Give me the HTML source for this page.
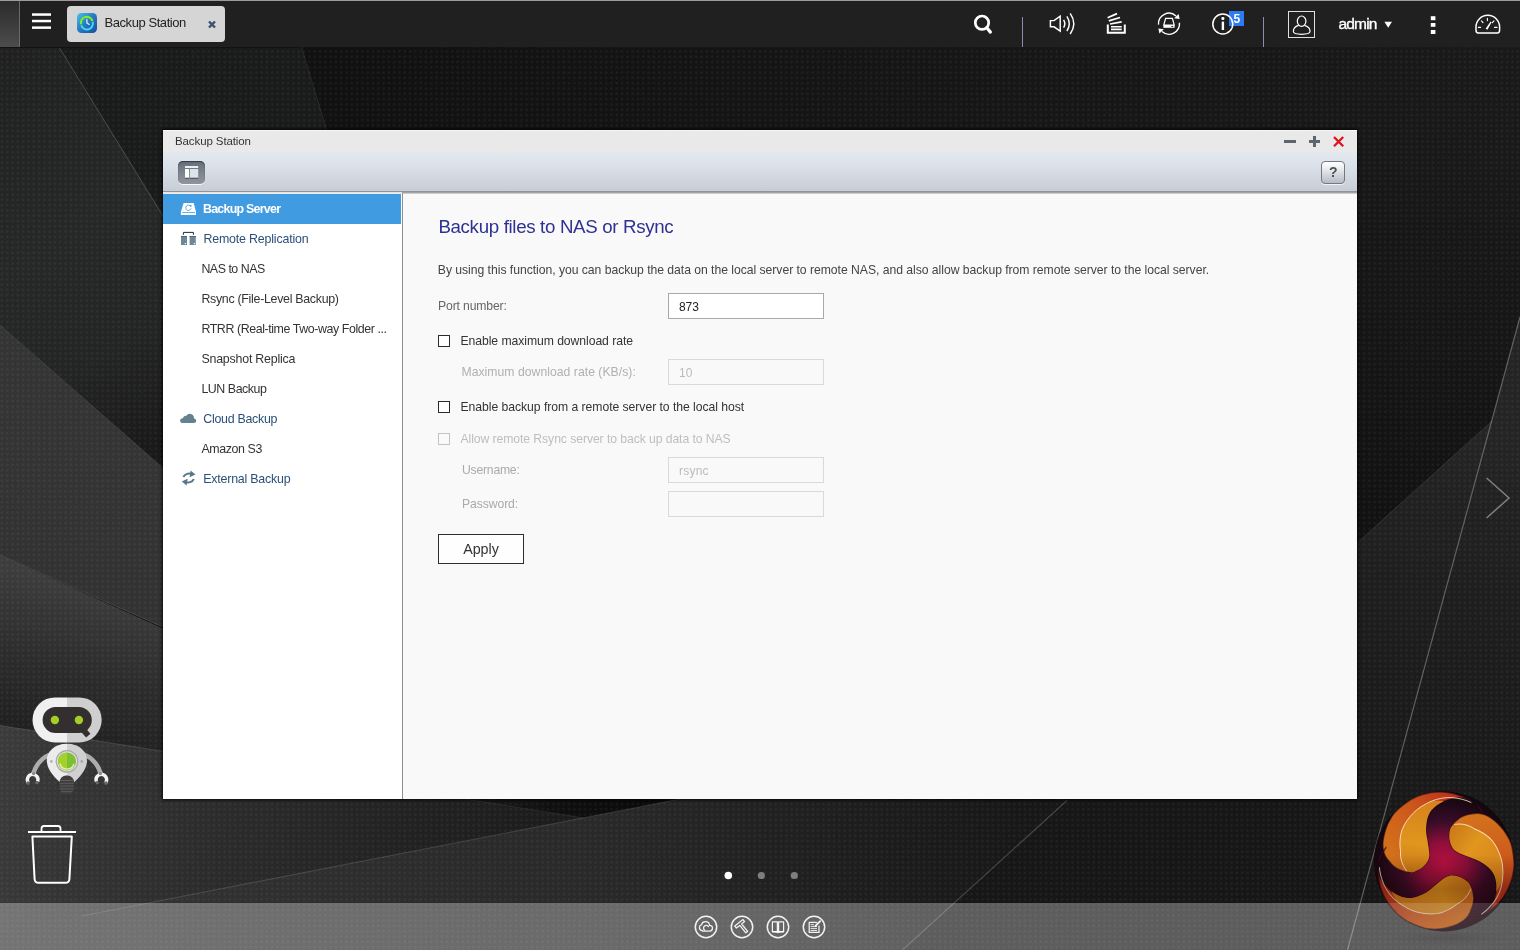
<!DOCTYPE html>
<html lang="en">
<head>
<meta charset="utf-8">
<title>Backup Station</title>
<style>
html,body{margin:0;padding:0;}
body{width:1520px;height:950px;overflow:hidden;position:relative;background:#181818;font-family:"Liberation Sans",sans-serif;}
.a{position:absolute;}
.t{position:absolute;white-space:nowrap;line-height:1;}
#texts{position:absolute;left:0;top:0;width:1520px;height:950px;will-change:transform;}
svg{position:absolute;overflow:visible;}
#bg{left:0;top:0;width:1520px;height:950px;}
#topbar{position:absolute;left:0;top:0;width:1520px;height:47px;background:#202020;}
#topline{position:absolute;left:0;top:0;width:1520px;height:1px;background:#9c9c9c;}
#deskbtn{position:absolute;left:0;top:1px;width:19px;height:46px;background:linear-gradient(#2b2b2b,#4c4c4c);border-right:1px solid #6a6a6a;}
#tab{position:absolute;left:67px;top:6px;width:158px;height:36px;background:#d5d5d5;border-radius:4px;}
.sep{position:absolute;top:17px;width:1px;height:30px;background:#8c8cb8;}
#badge{position:absolute;left:1229px;top:11px;width:15px;height:15px;background:#2d7bf4;}
#ubox{position:absolute;left:1288px;top:11px;width:25px;height:25px;border:1px solid #e0e0e0;}
#win{position:absolute;left:163px;top:130px;width:1194px;height:669px;background:#f9f9f9;box-shadow:0 0 3px 1px rgba(0,0,0,.85);}
#titlebar{position:absolute;left:0;top:0;width:1194px;height:22px;background:#e9e9e9;border-top:1px solid #f6f6f6;box-sizing:border-box;}
#toolbar{position:absolute;left:0;top:22px;width:1194px;height:39px;background:linear-gradient(#e4e9f0,#dbe1e9 35%,#ccd2db 85%,#c8ced7);}
#tbline{position:absolute;left:0;top:60.600px;width:1194px;height:3px;background:linear-gradient(#8e8e8e,#9c9c9c 45%,#e2e2e2);}
#side{position:absolute;left:0;top:62px;width:238.500px;height:607px;background:linear-gradient(#e4e1de,#f1efed 2px,#fff 2px);}
#sdiv{position:absolute;left:238.800px;top:62.500px;width:1.400px;height:606.500px;background:#8f8f8f;}
#sel{position:absolute;left:0;top:2px;width:238px;height:29.7px;background:#419be1;}
#sbtn{position:absolute;left:15px;top:31px;width:27px;height:23px;border-radius:5px;background:linear-gradient(#666e79,#7b838d 50%,#8f959f);box-shadow:0 1px 0 rgba(255,255,255,.85),inset 0 1px 1px rgba(30,35,40,.7);}
#hbtn{position:absolute;left:1157.5px;top:30.5px;width:22px;height:21px;border-radius:4px;border:1px solid #727985;background:linear-gradient(#ffffff,#eceef1 30%,#d0d3da 65%,#b7bbc5);box-shadow:0 1px 0 rgba(255,255,255,.7);}
.inp{position:absolute;left:505px;width:154px;height:24px;border:1px solid #a9a9a9;background:#fff;}
.inp.d{border-color:#d9d9d9;background:#f9f9f9;}
.cb{position:absolute;left:275px;width:10px;height:10px;border:1px solid #2a2a2a;background:#fff;}
.cb.d{border-color:#c4c4c4;background:#fafafa;}
#apply{position:absolute;left:275px;top:404px;width:84px;height:28px;border:1px solid #2e2e2e;background:#fefefe;}
#dock{position:absolute;left:0;top:903px;width:1520px;height:47px;background:rgba(255,255,255,.305);}
</style>
</head>

<body>
<svg id="bg" viewBox="0 0 1520 950">
  <defs>
    <pattern id="dots" width="5.3" height="5.3" patternUnits="userSpaceOnUse" patternTransform="translate(-0.5 1.3)">
      <rect x="1.2" y="1.2" width="2.6" height="2.6" rx="1.1" fill="#fff" opacity=".048"/>
    </pattern>
    <filter id="nz" x="0" y="0" width="100%" height="100%">
      <feTurbulence type="fractalNoise" baseFrequency=".75" numOctaves="2" seed="7" result="n"/>
      <feColorMatrix type="matrix" values="0 0 0 0 1  0 0 0 0 1  0 0 0 0 1  .9 .9 .9 0 -1.05"/>
    </filter>
    <linearGradient id="gb" gradientUnits="userSpaceOnUse" x1="300" y1="0" x2="1520" y2="0">
      <stop offset="0" stop-color="#101010"/><stop offset="1" stop-color="#1a1a1a"/>
    </linearGradient>
    <linearGradient id="g9" gradientUnits="userSpaceOnUse" x1="0" y1="150" x2="0" y2="520">
      <stop offset="0" stop-color="#000" stop-opacity="0"/><stop offset="1" stop-color="#000" stop-opacity=".32"/>
    </linearGradient>
    <linearGradient id="g0" gradientUnits="userSpaceOnUse" x1="0" y1="60" x2="200" y2="420">
      <stop offset="0" stop-color="#212222"/><stop offset=".45" stop-color="#282929"/><stop offset=".75" stop-color="#252626"/><stop offset="1" stop-color="#1a1a1a"/>
    </linearGradient>
    <linearGradient id="g1" gradientUnits="userSpaceOnUse" x1="60" y1="380" x2="0" y2="560">
      <stop offset="0" stop-color="#383838"/><stop offset="1" stop-color="#353535"/>
    </linearGradient>
    <linearGradient id="g2" gradientUnits="userSpaceOnUse" x1="40" y1="575" x2="0" y2="735">
      <stop offset="0" stop-color="#414141"/><stop offset=".45" stop-color="#313131"/><stop offset="1" stop-color="#202020"/>
    </linearGradient>
    <linearGradient id="g3" gradientUnits="userSpaceOnUse" x1="0" y1="730" x2="0" y2="910">
      <stop offset="0" stop-color="#3c3c3c"/><stop offset=".45" stop-color="#2f2f2f"/><stop offset="1" stop-color="#282828"/>
    </linearGradient>
    <linearGradient id="g4" gradientUnits="userSpaceOnUse" x1="0" y1="760" x2="760" y2="900">
      <stop offset="0" stop-color="#3f3f3f"/><stop offset=".12" stop-color="#373737"/><stop offset=".4" stop-color="#292929"/><stop offset=".7" stop-color="#1d1d1d"/><stop offset="1" stop-color="#161616"/>
    </linearGradient>
    <linearGradient id="g7" gradientUnits="userSpaceOnUse" x1="0" y1="0" x2="1067" y2="0">
      <stop offset="0" stop-color="#3b3b3b"/><stop offset=".094" stop-color="#383838"/><stop offset=".215" stop-color="#333"/><stop offset=".56" stop-color="#2b2b2b"/><stop offset=".8" stop-color="#1e1e1e"/><stop offset=".94" stop-color="#191919"/><stop offset="1" stop-color="#171717"/>
    </linearGradient>
    <linearGradient id="g8" gradientUnits="userSpaceOnUse" x1="458" y1="0" x2="640" y2="0">
      <stop offset="0" stop-color="#1c1c1c"/><stop offset=".5" stop-color="#101010"/><stop offset="1" stop-color="#090909"/>
    </linearGradient>
    <linearGradient id="g5" gradientUnits="userSpaceOnUse" x1="1440" y1="440" x2="1390" y2="900">
      <stop offset="0" stop-color="#262626"/><stop offset=".3" stop-color="#1f1f1f"/><stop offset=".65" stop-color="#1b1b1b"/><stop offset="1" stop-color="#171717"/>
    </linearGradient>
    <linearGradient id="g6" gradientUnits="userSpaceOnUse" x1="0" y1="903" x2="0" y2="800">
      <stop offset="0" stop-color="#000" stop-opacity="0"/><stop offset="1" stop-color="#000" stop-opacity=".35"/>
    </linearGradient>
  </defs>
  <rect width="1520" height="950" fill="url(#gb)"/>
  <!-- top-left facets -->
  <polygon points="60,48 301.600,48 420,440 500,763" fill="#1a1b1b"/>
  <polygon points="0,48 60,48 500,763 0,325" fill="url(#g0)"/>
  <polygon points="0,325 500,763 500,777 0,555" fill="url(#g1)"/>
  <polygon points="0,555 583.300,817.900 0,725.500" fill="url(#g2)"/>
  <polygon points="0,725.500 583.300,817.900 680,799 1357,799 1357,950 0,950" fill="url(#g4)"/>
  <polygon points="1357,48 1520,48 1520,317 1492,421 1357,543" fill="url(#g9)"/>
  <!-- right facets -->
  <polygon points="1520,317 1520,950 1348,950" fill="url(#g5)"/>
  <polygon points="1357,543 1492,421 1348,950 1357,950" fill="url(#g5)"/>

    <polygon points="0,932 680,799 1067,800 902,950 0,950" fill="url(#g7)"/>
  <polygon points="458,799 680,799 583.300,817.900" fill="url(#g8)"/>
  <!-- lines -->
  <g stroke="#fff" fill="none">
    <line x1="59.600" y1="48" x2="163" y2="216" stroke-opacity=".2" stroke-width="1"/>
    <line x1="301.600" y1="47" x2="326.500" y2="130" stroke-opacity=".1" stroke-width="1"/>
    <line x1="0" y1="325" x2="163" y2="468" stroke-opacity=".1" stroke-width="1"/>
    <line x1="0" y1="555" x2="163" y2="627" stroke-opacity=".12" stroke-width="1"/>
    <line x1="0" y1="725.500" x2="163" y2="751.300" stroke-opacity=".16" stroke-width="1"/>
    <line x1="82" y1="916" x2="680" y2="799" stroke-opacity=".14" stroke-width="1.200"/>
    <line x1="460" y1="798.400" x2="583.300" y2="817.900" stroke-opacity=".1" stroke-width="1"/>
    <line x1="1067.500" y1="800" x2="902.500" y2="950" stroke-opacity=".22" stroke-width="1.200"/>
    <line x1="1520" y1="317" x2="1347.500" y2="950" stroke-opacity=".33" stroke-width="1.200"/>
    <line x1="1357" y1="543" x2="1492" y2="421" stroke-opacity=".1" stroke-width="1"/>
  </g>
  <rect width="1520" height="950" fill="#000" opacity=".09"/>
  <rect width="1520" height="950" fill="url(#dots)"/>
  <rect width="1520" height="950" filter="url(#nz)" opacity=".035"/>
</svg>

<svg id="ball" style="left:0;top:0;width:1520px;height:950px" viewBox="0 0 1520 950">
  <defs>
    <radialGradient id="bbase" cx=".5" cy=".52" r=".5">
      <stop offset="0" stop-color="#b81040"/><stop offset=".32" stop-color="#8c0f3a"/><stop offset=".62" stop-color="#380b28" stop-opacity=".96"/><stop offset="1" stop-color="#12040c" stop-opacity=".85"/>
    </radialGradient>
    <linearGradient id="blobe" gradientUnits="userSpaceOnUse" x1="-.8" y1="0" x2=".5" y2="-.9">
      <stop offset="0" stop-color="#d4741c"/><stop offset=".45" stop-color="#cc581c"/><stop offset=".8" stop-color="#bc341c"/><stop offset="1" stop-color="#a01c1c"/>
    </linearGradient>
    <linearGradient id="blobe2" gradientUnits="userSpaceOnUse" x1="-.4" y1=".15" x2="-.3" y2="-.85">
      <stop offset="0" stop-color="#cc7a18"/><stop offset=".4" stop-color="#e0961e"/><stop offset="1" stop-color="#d8821c"/>
    </linearGradient>
    <linearGradient id="bshade" gradientUnits="userSpaceOnUse" x1="0" y1="-.1" x2="0" y2="1">
      <stop offset="0" stop-color="#200" stop-opacity="0"/><stop offset=".45" stop-color="#200" stop-opacity=".3"/><stop offset="1" stop-color="#200" stop-opacity=".12"/>
    </linearGradient>
    <radialGradient id="bsh" cx=".5" cy=".5" r=".5">
      <stop offset="0" stop-color="#000" stop-opacity=".5"/><stop offset="1" stop-color="#000" stop-opacity="0"/>
    </radialGradient>
    <g id="lobe">
      <path d="M.59 -.61 C.52 -.76 .45 -.84 .36 -.88 C.2 -.97 .05 -1 -.1 -.99 C-.25 -.98 -.38 -.94 -.48 -.88 C-.6 -.8 -.68 -.74 -.74 -.65 C-.8 -.56 -.83 -.48 -.85 -.4 C-.87 -.32 -.88 -.25 -.87 -.18 C-.86 -.1 -.83 -.05 -.79 -.01 C-.74 .06 -.68 .11 -.61 .13 C-.55 .16 -.49 .16 -.43 .15 C-.37 .13 -.32 .1 -.28 .06 C-.24 .02 -.21 -.03 -.21 -.09 C-.21 -.16 -.23 -.24 -.24 -.32 C-.26 -.4 -.26 -.48 -.25 -.55 C-.24 -.62 -.22 -.68 -.18 -.73 C-.13 -.79 -.07 -.83 0 -.86 C.08 -.89 .15 -.91 .23 -.91 C.33 -.9 .42 -.86 .5 -.78 C.54 -.72 .57 -.67 .59 -.61 Z" fill="url(#blobe)" stroke="#1a0510" stroke-opacity=".55" stroke-width=".02"/>
      <path d="M-.53 .14 C-.6 .05 -.63 -.05 -.62 -.14 C-.64 -.25 -.63 -.36 -.6 -.45 C-.56 -.55 -.5 -.63 -.43 -.7 C-.36 -.77 -.27 -.82 -.18 -.86 C-.12 -.87 -.06 -.87 0 -.86 C-.07 -.83 -.13 -.79 -.18 -.73 C-.22 -.68 -.24 -.62 -.25 -.55 C-.26 -.48 -.26 -.4 -.24 -.32 C-.23 -.24 -.21 -.16 -.21 -.09 C-.21 -.03 -.24 .02 -.28 .06 C-.32 .1 -.37 .13 -.43 .15 C-.47 .16 -.5 .15 -.53 .14 Z" fill="url(#blobe2)"/>
      <path d="M-.53 .14 C-.6 .05 -.63 -.05 -.62 -.14 C-.64 -.25 -.63 -.36 -.6 -.45 C-.56 -.55 -.5 -.63 -.43 -.7 C-.36 -.77 -.27 -.82 -.18 -.86 C-.08 -.9 .03 -.92 .13 -.91 C.22 -.9 .31 -.88 .39 -.84" fill="none" stroke="#fff5d8" stroke-opacity=".8" stroke-width=".014"/>
    </g>
  </defs>
  <ellipse cx="1450" cy="938" rx="62" ry="7" fill="url(#bsh)"/>
  <g id="ballg" transform="translate(1444 861.400) scale(70)">
    <circle r="1" fill="url(#bbase)"/>
    <use href="#lobe"/>
    <use href="#lobe" transform="rotate(120)"/>
    <use href="#lobe" transform="rotate(240)"/>
    <circle r="1" fill="url(#bshade)"/>
  </g>
</svg>
<div id="dock"></div>
<svg id="deskicons" style="left:0;top:0;width:1520px;height:950px" viewBox="0 0 1520 950">
  <defs>
    <clipPath id="hl"><rect x="20" y="690" width="47" height="60"/></clipPath>
    <clipPath id="hr"><rect x="67" y="690" width="50" height="60"/></clipPath>
    <clipPath id="bl"><rect x="20" y="740" width="47" height="45"/></clipPath>
    <clipPath id="br"><rect x="67" y="740" width="50" height="45"/></clipPath>
  </defs>
  <clipPath id="dockclip"><rect x="1360" y="903" width="160" height="47"/></clipPath>
  <g clip-path="url(#dockclip)" opacity=".5"><use href="#ballg"/></g>
  <!-- page dots -->
  <circle cx="728.3" cy="875.5" r="3.8" fill="#fff"/>
  <circle cx="761.3" cy="875.5" r="3.600" fill="#7e7e7e"/>
  <circle cx="794.3" cy="875.5" r="3.600" fill="#7e7e7e"/>
  <!-- chevron -->
  <path d="M1486.600 478 L1509 498 L1486.600 518" fill="none" stroke="#808080" stroke-width="1.500"/>
  <!-- robot -->
  <g id="robot">
    <!-- arms -->
    <path d="M50 754.500 C40.500 758.500 35.500 766 33.200 774" fill="none" stroke="#adadad" stroke-width="4.600" stroke-linecap="round"/>
    <path d="M84 754.500 C93.500 758.500 98.500 766 100.800 774" fill="none" stroke="#adadad" stroke-width="4.600" stroke-linecap="round"/>
    <path d="M28.400 782.800 A5.300 5.300 0 1 1 37.600 781.600" fill="none" stroke="#f4f4f4" stroke-width="3.400"/>
    <path d="M96.400 781.600 A5.300 5.300 0 1 1 105.600 782.800" fill="none" stroke="#f4f4f4" stroke-width="3.400"/>
    <path d="M26.800 781.200 L30 781.800 L29.200 785 L26.400 784.200 Z M36 780.800 L39 781.800 L37.600 784.600 L35 783.600 Z" fill="#6a6a6a"/>
    <path d="M107.200 781.200 L104 781.800 L104.800 785 L107.600 784.200 Z M98 780.800 L95 781.800 L96.400 784.600 L99 783.600 Z" fill="#6a6a6a"/>
    <circle cx="33.600" cy="773.600" r="1.600" fill="#888"/>
    <circle cx="100.400" cy="773.600" r="1.600" fill="#888"/>
    <!-- body -->
    <path d="M67 743.800 C80 743.800 87 752 87 760.500 C87 770 79 778 72.500 783.500 H61.500 C55 778 46.800 770 46.800 760.500 C46.800 752 54 743.800 67 743.800 Z" fill="#ececec" clip-path="url(#bl)"/>
    <path d="M67 743.800 C80 743.800 87 752 87 760.500 C87 770 79 778 72.500 783.500 H61.500 C55 778 46.800 770 46.800 760.500 C46.800 752 54 743.800 67 743.800 Z" fill="#d0d0d0" clip-path="url(#br)"/>
    <!-- spring -->
    <rect x="59.600" y="775.500" width="14.400" height="19.300" rx="6.500" fill="#3f3d3d"/>
    <path d="M60.400 780.500 H73.200 M59.800 783.300 H73.800 M59.800 786.100 H73.800 M60 788.900 H73.600 M61.200 791.700 H72.400" stroke="#5e5c5c" stroke-width="1"/>
    <circle cx="51.400" cy="761.500" r="1.400" fill="#b4b4b4"/>
    <circle cx="81.800" cy="761.500" r="1.400" fill="#a9a9a9"/>
    <circle cx="67" cy="761.400" r="11.400" fill="#a9a9a9"/>
    <circle cx="67" cy="761.400" r="10.200" fill="#dcdcdc"/>
    <circle cx="67" cy="761.400" r="9" fill="#7fbf36"/>
    <path d="M67 752.400 A9 9 0 0 0 67 770.400 Z" fill="#a3d22e"/>
    <path d="M59.800 763.500 A7.400 7.400 0 0 0 74 764" fill="none" stroke="#e2f4b4" stroke-width="1.300"/>
    <!-- head -->
    <rect x="32.500" y="697.400" width="69.200" height="45.100" rx="22.500" fill="#f0f0f0" clip-path="url(#hl)"/>
    <rect x="32.500" y="697.400" width="69.200" height="45.100" rx="22.500" fill="#cfcfcf" clip-path="url(#hr)"/>
    <rect x="42.600" y="706.900" width="49.200" height="26.200" rx="13.100" fill="#322f2e"/>
    <path d="M81.500 728 L88.300 735.600" stroke="#322f2e" stroke-width="5.800" fill="none"/>
    <circle cx="54.900" cy="720" r="4.200" fill="#a5cd28"/>
    <circle cx="78.900" cy="720" r="4.200" fill="#a5cd28"/>
  </g>
  <!-- trash -->
  <g fill="none" stroke="#fff" stroke-width="2" stroke-linejoin="round">
    <path d="M41.500 831.500 V828.600 Q41.500 826 44 826 H58 Q60.500 826 60.500 828.600 V831.500" stroke-width="1.800"/>
    <path d="M28 832 H76"/>
    <path d="M32.400 836.500 H71.800 L69.400 879 Q69.200 882.800 65.400 882.800 H38.600 Q34.800 882.800 34.600 879 Z"/>
  </g>
  <!-- dock icons -->
  <g fill="none" stroke="#fff" stroke-opacity=".92" stroke-width="1.500">
    <circle cx="706" cy="927" r="10.700"/>
    <circle cx="742" cy="927" r="10.700"/>
    <circle cx="778" cy="927" r="10.700"/>
    <circle cx="814" cy="927" r="10.700"/>
  </g>
  <g fill="none" stroke="#fff" stroke-opacity=".92" stroke-width="1.250" stroke-linejoin="round" stroke-linecap="round">
    <!-- cloud spiral -->
    <path d="M702.500 931 H709.500 C711.500 931 712.500 929.500 712.500 928 C712.500 926.300 711 925.200 709.600 925.400 C709.400 923 707.600 921.600 705.500 921.600 C703.500 921.600 702 922.900 701.600 924.600 C700.200 925 699.400 926.200 699.400 927.600 C699.400 929.200 700.600 930.600 702.500 930.600"/>
    <path d="M708.500 926.500 C707.500 925.200 705.500 925 704.300 926.200 C703.100 927.400 703.300 929.400 704.800 930.200"/>
    <!-- hammer -->
    <path d="M734.800 926 L743 919.600 L744.600 921.600 L741.600 924 L747.600 931.400 L745.800 932.800 L739.800 925.400 L736.400 928 Z"/>
    <!-- book -->
    <path d="M772.400 921.800 H777.400 V931.600 H772.400 Z M778.600 921.800 H783.600 V931.600 H778.600 Z"/>
    <path d="M772.400 931.600 C775 932 777 932 778 932.600 C779 932 781 932 783.600 931.600"/>
    <!-- note -->
    <path d="M816.400 922.400 H809.200 V932.400 H819 V926"/>
    <path d="M811 926.600 H816.600 M811 928.600 H816.600 M811 930.500 H816.600 M811 924.600 H813.500" stroke-width=".9"/>
    <path d="M815.400 926 L820.200 921.200" stroke-width="1.800"/>
  </g>
</svg>

<div id="topbar">
  <div id="deskbtn"></div>
  <div id="tab"></div>
  <div class="sep" style="left:1022px"></div>
  <div class="sep" style="left:1263px"></div>
  <div id="badge"></div>
  <div id="ubox"></div>
  <svg id="tbicons" style="left:0;top:0;width:1520px;height:47px" viewBox="0 0 1520 47">
    <defs>
      <linearGradient id="bsg" x1="0" y1="0" x2="1" y2="1">
        <stop offset="0" stop-color="#48c4ee"/><stop offset=".45" stop-color="#2a7cc8"/><stop offset="1" stop-color="#1a4c9e"/>
      </linearGradient>
      <linearGradient id="bsr" x1="0" y1="0" x2="0" y2="1">
        <stop offset="0" stop-color="#9be83a"/><stop offset=".5" stop-color="#35d6c0"/><stop offset="1" stop-color="#29c4f2"/>
      </linearGradient>
    </defs>
    <!-- hamburger -->
    <g fill="#fff">
      <rect x="32" y="13.3" width="19" height="2.5"/>
      <rect x="32" y="19.8" width="19" height="2.5"/>
      <rect x="32" y="26.4" width="19" height="2.5"/>
    </g>
    <!-- tab app icon -->
    <rect x="77" y="13" width="20" height="20" rx="4.500" fill="url(#bsg)"/>
    <path d="M81.100 24.300 A5.900 5.900 0 0 1 92.500 21.200" fill="none" stroke="#7cee22" stroke-width="2.100"/>
    <path d="M92.700 22.100 A5.900 5.900 0 0 1 81.300 25.200" fill="none" stroke="#3fdff0" stroke-width="1.900"/>
    <path d="M86.900 19.400 V22.900 L89.200 24.500" fill="none" stroke="#cfeaf8" stroke-width="1.300" stroke-linecap="round" stroke-linejoin="round"/>
    <!-- tab close -->
    <path d="M209 21.500 L215 27.500 M215 21.500 L209 27.500" stroke="#3b506a" stroke-width="2.4" fill="none"/>
    <!-- search -->
    <circle cx="982" cy="22.7" r="6.7" fill="none" stroke="#fff" stroke-width="2.7"/>
    <path d="M986.8 27.800 L990.400 32.100" stroke="#fff" stroke-width="3.200" stroke-linecap="round"/>
    <!-- volume -->
    <g fill="none" stroke="#fff" stroke-width="1.450" stroke-linejoin="miter">
      <path d="M1050.4 20.6 H1054 L1060.2 16.2 V31.2 L1054 26.8 H1050.4 Z"/>
      <path d="M1063.6 19.8 Q1066 23.7 1063.6 27.6"/>
      <path d="M1066.9 16.4 Q1071.6 23.7 1066.9 31"/>
      <path d="M1070.2 13.4 Q1077.4 23.7 1070.2 34"/>
    </g>
    <!-- background tasks (stack) -->
    <g fill="none" stroke="#fff">
      <path d="M1107.8 24.5 V32.8 H1124.8 V24.5" stroke-width="2"/>
      <path d="M1111 29.400 H1121.700 M1111 26.700 H1121.700" stroke-width="1.600"/>
      <path d="M1110 24 L1121.7 21.8 M1108.8 20.9 L1120 17.5 M1107.600 17.800 L1117 13.600" stroke-width="1.700"/>
    </g>
    <!-- sync / backup -->
    <g fill="none" stroke="#fff" stroke-width="1.4">
      <path d="M1158.54 24.6 A10.5 10.5 0 0 1 1176 15.9"/>
      <path d="M1179.46 22.8 A10.5 10.5 0 0 1 1162 31.5"/>
    </g>
    <path d="M1179.6 18.9 L1178.6 13.9 L1174.2 18.2 Z" fill="#fff"/>
    <path d="M1158.4 28.5 L1159.4 33.5 L1163.8 29.2 Z" fill="#fff"/>
    <path d="M1165.6 18.3 H1172.4 L1174.2 25 H1163.8 Z" fill="none" stroke="#fff" stroke-width="1.2"/>
    <rect x="1163.4" y="25" width="11.200" height="2.800" fill="#fff"/>
    <rect x="1171.4" y="25.900" width="1.800" height="1" fill="#202020"/>
    <!-- info -->
    <circle cx="1222.8" cy="24" r="10" fill="none" stroke="#fff" stroke-width="1.5"/>
    <rect x="1221.7" y="21.6" width="2.4" height="8.4" fill="#fff"/>
    <rect x="1221.4" y="17" width="3" height="3" rx="1.2" fill="#fff"/>
    <!-- user -->
    <g fill="none" stroke="#fff" stroke-width="1.2">
      <ellipse cx="1301.6" cy="21.2" rx="4.3" ry="5.2"/>
      <path d="M1298.6 25.4 C1294.6 26.6 1293.2 29.4 1293.4 31.8 C1293.6 33.6 1296 34.3 1301.6 34.3 C1307.2 34.3 1309.8 33.6 1310 31.8 C1310.2 29.4 1308.6 26.6 1304.6 25.4"/>
    </g>
    <!-- dropdown arrow -->
    <path d="M1384.4 21.8 H1392 L1388.2 27.8 Z" fill="#fff"/>
    <!-- kebab -->
    <g fill="#fff">
      <rect x="1430.8" y="16.2" width="4.6" height="4"/>
      <rect x="1430.8" y="23" width="4.6" height="3.8"/>
      <rect x="1430.8" y="30" width="4.6" height="4"/>
    </g>
    <!-- dashboard gauge -->
    <g fill="none" stroke="#fff" stroke-width="1.5" stroke-linecap="round">
      <path d="M1478.2 33 C1476.6 33 1476 32 1476 30 V27 A11.8 11.8 0 0 1 1499.6 27 V30 C1499.6 32 1499 33 1497.4 33 Z" stroke-linejoin="round"/>
      <path d="M1487.4 18.2 V20.6 M1481.4 20.9 L1483 22.6 M1494 20.9 L1492.4 22.6 M1478.4 27.4 H1480.6 M1494.6 27.4 H1497" stroke-width="1.1"/>
    </g>
    <path d="M1485.6 28.8 L1490.6 21.6 L1491.6 22.2 L1487.4 29.8 Z" fill="#fff"/>
  </svg>
</div>
<div id="topline"></div>

<div id="win">
  <div id="titlebar"></div>
  <div id="toolbar"></div>
  <div id="tbline"></div>
  <div id="side"><div id="sel"></div></div>
  <div id="sdiv"></div>
  <div id="sbtn"></div>
  <div id="hbtn"></div>
  <div class="inp" style="top:163px"></div>
  <div class="inp d" style="top:229px"></div>
  <div class="inp d" style="top:327px"></div>
  <div class="inp d" style="top:361px"></div>
  <div class="cb" style="top:205px"></div>
  <div class="cb" style="top:271px"></div>
  <div class="cb d" style="top:303px"></div>
  <div id="apply"></div>
  <svg id="winicons" style="left:-163px;top:-130px;width:1520px;height:950px" viewBox="0 0 1520 950">
    <!-- window controls -->
    <rect x="1284" y="140" width="12" height="3" fill="#5d6570"/>
    <rect x="1309" y="140" width="11" height="3" fill="#5d6570"/>
    <rect x="1313" y="136" width="3" height="11" fill="#5d6570"/>
    <path d="M1334 137 L1343.2 146.2 M1343.2 137 L1334 146.2" stroke="#e0121d" stroke-width="2.3" fill="none"/>
    <!-- sidebar toggle icon -->
    <rect x="185" y="166" width="13.2" height="2" fill="#e9eff3"/>
    <rect x="185" y="169" width="4.1" height="8.8" fill="#fff"/>
    <rect x="190" y="169" width="8.2" height="8.8" fill="#dde5ea"/>
    <rect x="185" y="177.8" width="4.1" height="1" fill="#4d545e"/>
    <rect x="190" y="177.8" width="8.2" height="1" fill="#4d545e"/>
    <!-- backup server icon -->
    <path d="M183.6 203.1 H193.7 L196 212 V215.1 H180.9 V212 Z" fill="#fff"/>
    <rect x="182.3" y="212" width="12.7" height=".8" fill="#419be1"/>
    <path d="M190.4 206.2 A2.6 2.6 0 1 0 190.9 208.4" fill="none" stroke="#419be1" stroke-width=".9"/>
    <path d="M189.2 205.4 L191.6 205 L191.2 207.2 Z" fill="#419be1"/>
    <!-- remote replication icon -->
    <path d="M183.4 234.8 V232.4 H193.4 V234.8" fill="none" stroke="#1c2c3a" stroke-width="1"/>
    <rect x="181" y="236" width="6" height="9" fill="#6f8898"/>
    <rect x="189.6" y="236" width="6.2" height="9" fill="#6f8898"/>
    <rect x="181" y="236" width="6" height="1" fill="#4c6474"/>
    <rect x="189.6" y="236" width="6.2" height="1" fill="#4c6474"/>
    <rect x="184.8" y="243" width="1.2" height="1.2" fill="#fff"/>
    <rect x="193.8" y="243" width="1.2" height="1.2" fill="#fff"/>
    <!-- cloud -->
    <path d="M182.6 422.9 C180.6 422.9 179.8 421.4 180.2 420 C180.6 418.6 182 418 183 418.2 C183.2 416.4 184.8 415.4 186.4 415.8 C187.4 413.8 190.2 413.2 192 414.4 C193.6 415.4 194.2 417 194 418.4 C195.6 418.6 196.4 420 196.2 421.2 C196 422.4 195 422.9 193.8 422.9 Z" fill="#65808f"/>
    <!-- external backup arrows -->
    <g fill="none" stroke="#56778a" stroke-width="2">
      <path d="M183.4 477 C184.6 473.8 189 472.8 192 474.2"/>
      <path d="M193.8 479 C192.6 482.2 188.2 483.2 185.2 481.8"/>
    </g>
    <path d="M190.6 470.4 L195.4 474.6 L189.6 477.2 Z" fill="#56778a"/>
    <path d="M186.6 485.6 L181.8 481.4 L187.6 478.8 Z" fill="#56778a"/>
  </svg>
</div>

<div id="texts">
<span class="t" style="left:104.5px;top:16.10px;font-size:13px;color:#222;letter-spacing:-0.435px;">Backup Station</span>
<span class="t" style="left:1338.4px;top:16.38px;font-size:15.5px;color:#fff;letter-spacing:-0.780px;-webkit-text-stroke:.35px #fff;">admin</span>
<span class="t" style="left:1233.4px;top:12.64px;font-size:12px;color:#fff;font-weight:700;letter-spacing:0.000px;">5</span>
<span class="t" style="left:175.0px;top:136.07px;font-size:11.5px;color:#333;letter-spacing:-0.105px;">Backup Station</span>
<span class="t" style="left:1329.0px;top:164.75px;font-size:14px;color:#4a4f58;font-weight:700;letter-spacing:0.000px;">?</span>
<span class="t" style="left:203.0px;top:203.30px;font-size:12.4px;color:#fff;font-weight:700;letter-spacing:-0.733px;">Backup Server</span>
<span class="t" style="left:203.4px;top:233.30px;font-size:12.4px;color:#2b5078;letter-spacing:-0.167px;">Remote Replication</span>
<span class="t" style="left:201.4px;top:263.30px;font-size:12.4px;color:#333;letter-spacing:-0.476px;">NAS to NAS</span>
<span class="t" style="left:201.4px;top:293.30px;font-size:12.4px;color:#333;letter-spacing:-0.292px;">Rsync (File-Level Backup)</span>
<span class="t" style="left:201.4px;top:323.30px;font-size:12.4px;color:#333;letter-spacing:-0.413px;">RTRR (Real-time Two-way Folder ...</span>
<span class="t" style="left:201.4px;top:353.30px;font-size:12.4px;color:#333;letter-spacing:-0.202px;">Snapshot Replica</span>
<span class="t" style="left:201.4px;top:383.30px;font-size:12.4px;color:#333;letter-spacing:-0.451px;">LUN Backup</span>
<span class="t" style="left:203.3px;top:413.30px;font-size:12.4px;color:#2b5078;letter-spacing:-0.278px;">Cloud Backup</span>
<span class="t" style="left:201.4px;top:443.30px;font-size:12.4px;color:#333;letter-spacing:-0.395px;">Amazon S3</span>
<span class="t" style="left:203.3px;top:473.30px;font-size:12.4px;color:#2b5078;letter-spacing:-0.210px;">External Backup</span>
<span class="t" style="left:438.4px;top:217.97px;font-size:18.7px;color:#2e3192;letter-spacing:-0.325px;">Backup files to NAS or Rsync</span>
<span class="t" style="left:437.8px;top:264.47px;font-size:12.2px;color:#444;letter-spacing:-0.035px;">By using this function, you can backup the data on the local server to remote NAS, and also allow backup from remote server to the local server.</span>
<span class="t" style="left:438.0px;top:300.17px;font-size:12.2px;color:#666;letter-spacing:-0.141px;">Port number:</span>
<span class="t" style="left:679.0px;top:301.14px;font-size:12px;color:#222;letter-spacing:-0.066px;">873</span>
<span class="t" style="left:460.5px;top:334.97px;font-size:12.2px;color:#333;letter-spacing:-0.060px;">Enable maximum download rate</span>
<span class="t" style="left:461.5px;top:366.47px;font-size:12.2px;color:#b0b0b0;letter-spacing:0.032px;">Maximum download rate (KB/s):</span>
<span class="t" style="left:679.0px;top:367.14px;font-size:12px;color:#bbb;letter-spacing:0.041px;">10</span>
<span class="t" style="left:460.5px;top:400.97px;font-size:12.2px;color:#333;letter-spacing:-0.043px;">Enable backup from a remote server to the local host</span>
<span class="t" style="left:460.5px;top:432.97px;font-size:12.2px;color:#bebebe;letter-spacing:-0.074px;">Allow remote Rsync server to back up data to NAS</span>
<span class="t" style="left:462.0px;top:463.97px;font-size:12.2px;color:#aaa;letter-spacing:-0.226px;">Username:</span>
<span class="t" style="left:679.0px;top:465.14px;font-size:12px;color:#bbb;letter-spacing:0.232px;">rsync</span>
<span class="t" style="left:462.0px;top:497.97px;font-size:12.2px;color:#aaa;letter-spacing:-0.088px;">Password:</span>
<span class="t" style="left:463.2px;top:542.20px;font-size:14.3px;color:#333;letter-spacing:-0.041px;">Apply</span>
</div>
</body>
</html>
